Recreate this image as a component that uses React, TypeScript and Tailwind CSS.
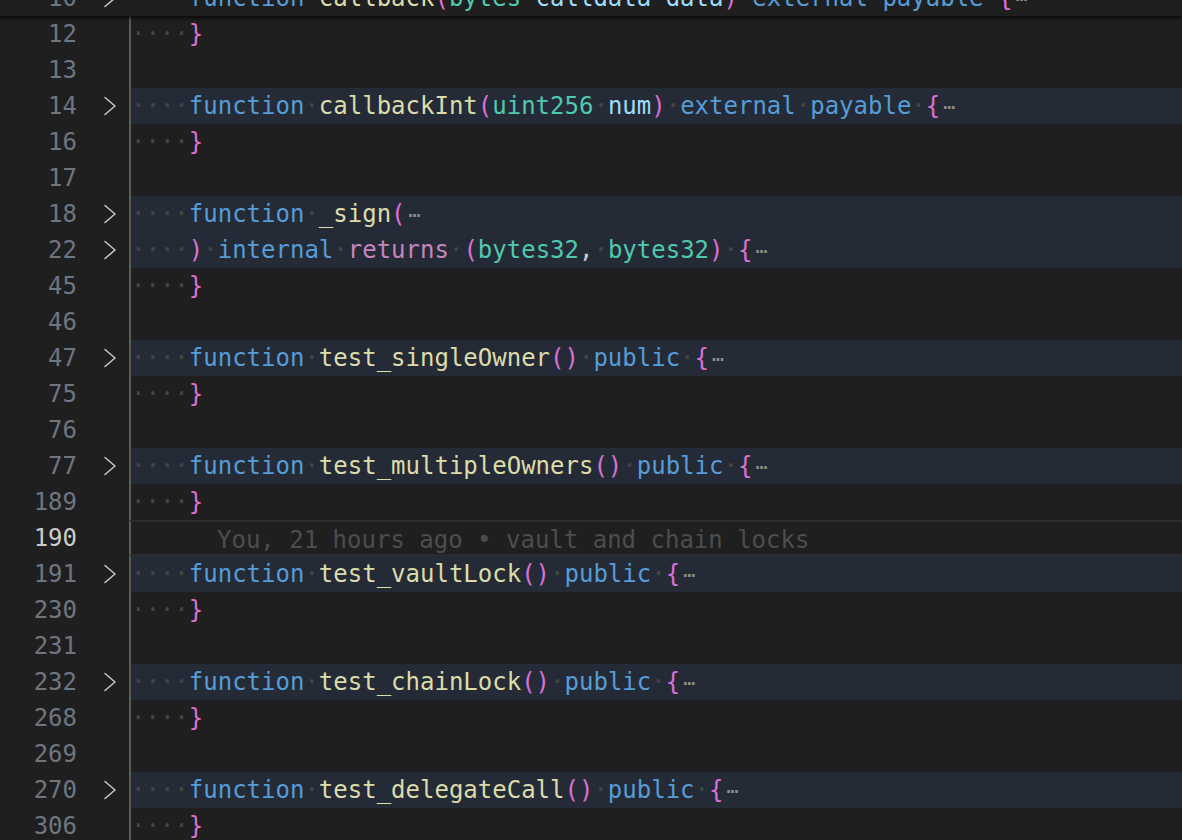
import React from "react";

type Tok = [string, string];

const KW = "text-[#569cd6]";
const FN = "text-[#dcdcaa]";
const TY = "text-[#4ec9b0]";
const PA = "text-[#9cdcfe]";
const BR = "text-[#da70d6]";
const PU = "text-[#c586c0]";
const PL = "text-[#cccccc]";

type Row = {
  n: number;
  fold?: boolean;
  hl?: boolean;
  toks?: Tok[];
  ell?: boolean;
  blame?: boolean;
};

function fnRow(n: number, name: string): Row {
  return {
    n,
    fold: true,
    hl: true,
    ell: true,
    toks: [
      ["function", KW],
      [" ", ""],
      [name, FN],
      ["()", BR],
      [" ", ""],
      ["public", KW],
      [" ", ""],
      ["{", BR],
    ],
  };
}

const rows: Row[] = [
  { n: 12, toks: [["}", BR]] },
  { n: 13 },
  {
    n: 14,
    fold: true,
    hl: true,
    ell: true,
    toks: [
      ["function", KW],
      [" ", ""],
      ["callbackInt", FN],
      ["(", BR],
      ["uint256", TY],
      [" ", ""],
      ["num", PA],
      [")", BR],
      [" ", ""],
      ["external", KW],
      [" ", ""],
      ["payable", KW],
      [" ", ""],
      ["{", BR],
    ],
  },
  { n: 16, toks: [["}", BR]] },
  { n: 17 },
  {
    n: 18,
    fold: true,
    hl: true,
    ell: true,
    toks: [
      ["function", KW],
      [" ", ""],
      ["_sign", FN],
      ["(", BR],
    ],
  },
  {
    n: 22,
    fold: true,
    hl: true,
    ell: true,
    toks: [
      [")", BR],
      [" ", ""],
      ["internal", KW],
      [" ", ""],
      ["returns", PU],
      [" ", ""],
      ["(", BR],
      ["bytes32", TY],
      [",", PL],
      [" ", ""],
      ["bytes32", TY],
      [")", BR],
      [" ", ""],
      ["{", BR],
    ],
  },
  { n: 45, toks: [["}", BR]] },
  { n: 46 },
  fnRow(47, "test_singleOwner"),
  { n: 75, toks: [["}", BR]] },
  { n: 76 },
  fnRow(77, "test_multipleOwners"),
  { n: 189, toks: [["}", BR]] },
  { n: 190, blame: true },
  fnRow(191, "test_vaultLock"),
  { n: 230, toks: [["}", BR]] },
  { n: 231 },
  fnRow(232, "test_chainLock"),
  { n: 268, toks: [["}", BR]] },
  { n: 269 },
  fnRow(270, "test_delegateCall"),
  { n: 306, toks: [["}", BR]] },
];

function Chevron() {
  return (
    <svg width="14" height="20" viewBox="0 0 14 20" className="block">
      <path d="M2 1.5 L12 10 L2 18.5" fill="none" stroke="#c5c5c5" strokeWidth="1.6" strokeLinecap="round" strokeLinejoin="round" />
    </svg>
  );
}

function Dot() {
  return <span className="text-[#464646]">·</span>;
}

function Ellipsis() {
  return <span className="ml-[3px] text-[20px] text-[#8f8f8f]">⋯</span>;
}

function Code({ toks, dots }: { toks: Tok[]; dots: boolean }) {
  return (
    <>
      {dots ? (
        <>
          <Dot />
          <Dot />
          <Dot />
          <Dot />
        </>
      ) : (
        <span>{"    "}</span>
      )}
      {toks.map((t, i) =>
        t[0] === " " ? (
          dots ? (
            <Dot key={i} />
          ) : (
            <span key={i}> </span>
          )
        ) : (
          <span key={i} className={t[1]}>
            {t[0]}
          </span>
        )
      )}
    </>
  );
}

function Gutter({ n, fold, active }: { n: number; fold?: boolean; active?: boolean }) {
  return (
    <div className="flex w-[129px] shrink-0 items-center">
      <div className={"w-[77px] text-right " + (active ? "text-[#cccccc]" : "text-[#6e7681]")}>{n}</div>
      <div className="ml-[26px] flex w-[14px] items-center">{fold ? <Chevron /> : null}</div>
    </div>
  );
}

export default function App() {
  return (
    <div className="h-[840px] w-[1182px] overflow-hidden bg-[#1f1f1f] font-['DejaVu_Sans_Mono',monospace] text-[24px] leading-[36px] whitespace-pre">
      {/* sticky scroll header */}
      <div className="relative z-10 -mt-[20px] flex h-[36px] bg-[#1f1f1f] shadow-[0_2px_4px_rgba(0,0,0,0.75)]">
        <Gutter n={10} fold />
        <div className="pl-[2px]">
          <Code
            dots={false}
            toks={[
              ["function", KW],
              [" ", ""],
              ["callback", FN],
              ["(", BR],
              ["bytes", TY],
              [" ", ""],
              ["calldata", PA],
              [" ", ""],
              ["data", PA],
              [")", BR],
              [" ", ""],
              ["external", KW],
              [" ", ""],
              ["payable", KW],
              [" ", ""],
              ["{", BR],
            ]}
          />
          <Ellipsis />
        </div>
      </div>
      {rows.map((r) => (
        <div key={r.n} className="flex h-[36px]">
          <Gutter n={r.n} fold={r.fold} active={r.blame} />
          <div
            className={
              "flex-1 border-l-2 border-[#5a5a5a] " +
              (r.hl ? "bg-[#252b36] " : "") +
              (r.blame ? "border-y-2 border-y-[#2b2b2b] " : "")
            }
          >
            {r.blame ? (
              <div className="pl-[86px] text-[#4d4d4d]">You, 21 hours ago • vault and chain locks</div>
            ) : r.toks ? (
              <div>
                <Code toks={r.toks} dots />
                {r.ell ? <Ellipsis /> : null}
              </div>
            ) : null}
          </div>
        </div>
      ))}
    </div>
  );
}
